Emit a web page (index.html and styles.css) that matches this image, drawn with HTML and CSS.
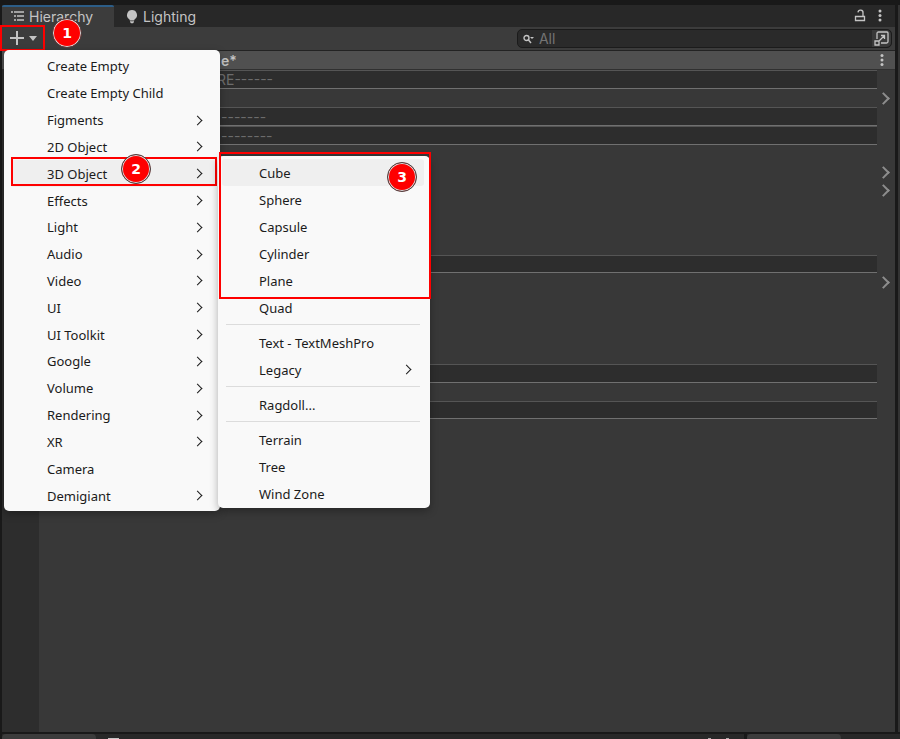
FILE: index.html
```html
<!DOCTYPE html>
<html lang="en">
<head>
  <meta charset="utf-8">
  <title>Hierarchy</title>
  <link rel="stylesheet" href="styles.css">
</head>
<body>
  <div class="workspace">
    <main class="panel">
      <div class="tabs">
        <button class="tab active">
          <svg width="13" height="12" viewBox="0 0 13 12" fill="none" stroke="currentColor" stroke-width="1.3"><path d="M0 2h2M3 2h10M3 6h2M6 6h7M3 10h2M6 10h7"/></svg>
          Hierarchy
        </button>
        <button class="tab">
          <svg width="12" height="15" viewBox="0 0 12 15" fill="currentColor"><path d="M6 1a5 5 0 0 1 3 9c-.6.500-.8.800-.8 1.500H3.800c0-.7-.2-1-.8-1.500A5 5 0 0 1 6 1zM4 12.300h4v.7l-1 1.200H5L4 13z"/></svg>
          Lighting
        </button>
        <div class="tab-tools">
          <button class="icon" aria-label="Lock">
            <svg width="12" height="14" viewBox="0 0 12 14" fill="none" stroke="currentColor" stroke-width="1.300"><path d="M1.500 7.500h9v4h-9zM9 7V4a2.500 2.500 0 0 0-5-.6"/></svg>
          </button>
          <button class="icon" aria-label="Panel menu">
            <svg width="4" height="14" viewBox="0 0 4 14" fill="currentColor"><circle cx="2" cy="2" r="1.500"/><circle cx="2" cy="6.500" r="1.500"/><circle cx="2" cy="11" r="1.500"/></svg>
          </button>
        </div>
      </div>

      <div class="toolbar">
        <div class="create">
          <button class="create-button" aria-label="Create">
            <svg width="30" height="16" viewBox="0 0 30 16" fill="currentColor"><path d="M8 1h2v6h6v2h-6v6H8V9H2V7h6zM21 6h8l-4 5z"/></svg>
          </button>
          <span class="badge badge-1">1</span>

          <ul class="menu">
            <li><button>Create Empty</button></li>
            <li><button>Create Empty Child</button></li>
            <li><button class="more">Figments</button></li>
            <li><button class="more">2D Object</button></li>
            <li class="open">
              <button class="more selected">3D Object</button>
              <span class="outline"></span>
              <span class="badge badge-2">2</span>
              <ul class="submenu">
                <li><button class="selected">Cube</button></li>
                <li><button>Sphere</button></li>
                <li><button>Capsule</button></li>
                <li><button>Cylinder</button></li>
                <li><button>Plane</button></li>
                <li><button>Quad</button></li>
                <li class="separator"></li>
                <li><button>Text - TextMeshPro</button></li>
                <li><button class="more">Legacy</button></li>
                <li class="separator"></li>
                <li><button>Ragdoll...</button></li>
                <li class="separator"></li>
                <li><button>Terrain</button></li>
                <li><button>Tree</button></li>
                <li><button>Wind Zone</button></li>
              </ul>
              <span class="outline shapes-outline"></span>
              <span class="badge badge-3">3</span>
            </li>
            <li><button class="more">Effects</button></li>
            <li><button class="more">Light</button></li>
            <li><button class="more">Audio</button></li>
            <li><button class="more">Video</button></li>
            <li><button class="more">UI</button></li>
            <li><button class="more">UI Toolkit</button></li>
            <li><button class="more">Google</button></li>
            <li><button class="more">Volume</button></li>
            <li><button class="more">Rendering</button></li>
            <li><button class="more">XR</button></li>
            <li><button>Camera</button></li>
            <li><button class="more">Demigiant</button></li>
          </ul>
        </div>

        <div class="search">
          <svg width="12" height="10" viewBox="0 0 12 10" fill="none" stroke="currentColor" stroke-width="1.400"><circle cx="3.500" cy="4" r="2.500"/><path d="M5.500 6l2.500 3"/><path d="M7 3h4L9 5z" fill="currentColor" stroke="none"/></svg>
          <input type="text" placeholder="All" aria-label="Search">
          <button class="icon" aria-label="Open search window">
            <svg width="15" height="15" viewBox="0 0 15 15" fill="none" stroke="currentColor" stroke-width="1.300"><path d="M3 8V2.500Q3 1 4.500 1H13q1 0 1 1v8.500q0 1.500-1.500 1.500H7M1 10h4v4H1zM5.500 9.500L10.500 4.500M7 4.500h3.500V8"/></svg>
          </button>
        </div>
      </div>

      <div class="scene">
        <span>e*</span>
        <button class="icon" aria-label="Scene menu">
          <svg width="4" height="14" viewBox="0 0 4 14" fill="currentColor"><circle cx="2" cy="2.500" r="1.500"/><circle cx="2" cy="7" r="1.500"/><circle cx="2" cy="11.500" r="1.500"/></svg>
        </button>
      </div>

      <div class="tree">
        <div class="gutter"></div>
        <ul class="rows">
          <li class="header re">RE------</li>
          <li class="prefab"></li>
          <li class="header">-------</li>
          <li class="header">--------</li>
          <li></li>
          <li class="prefab"></li>
          <li class="prefab"></li>
          <li></li>
          <li></li>
          <li></li>
          <li class="header"></li>
          <li class="prefab"></li>
          <li></li>
          <li></li>
          <li></li>
          <li></li>
          <li class="header"></li>
          <li></li>
          <li class="header"></li>
        </ul>
      </div>
    </main>
    <div class="next-panel"></div>
  </div>

  <div class="dock">
    <div class="dock-left"><span class="dock-tab"></span><span class="dock-icon"></span><span class="dock-dot"></span><span class="dock-dot"></span></div>
    <div class="dock-right"><span class="dock-tab"></span></div>
  </div>
</body>
</html>
```

FILE: styles.css
```css
* {
  box-sizing: border-box;
}

body {
  margin: 0;
  min-height: 100vh;
  display: flex;
  flex-direction: column;
  overflow: hidden;
  background: #191919;
  color: #c4c4c4;
  font-family: Inter, "Liberation Sans", sans-serif;
  font-size: 14px;
}

ul {
  list-style: none;
  margin: 0;
  padding: 0;
}

button {
  border: none;
  padding: 0;
  margin: 0;
  background: none;
  color: inherit;
  font: inherit;
}

svg {
  display: block;
}

.workspace {
  flex: 1;
  display: flex;
  gap: 3px;
  padding: 5px 0 0 2px;
}

.panel {
  flex: 1;
  display: flex;
  flex-direction: column;
  background: #383838;
}

.next-panel {
  width: 2px;
  background: #333;
}

.tabs {
  display: flex;
  height: 22px;
  background: #282828;
}

.tab {
  display: flex;
  align-items: center;
  gap: 5px;
  padding: 0 12px;
}

.tab.active {
  width: 112px;
  padding: 0 0 2px 9px;
  background: #3c3c3c;
  border-top: 2px solid #2c5d87;
  border-radius: 2px 2px 0 0;
}

.tab-tools {
  margin-left: auto;
  display: flex;
  align-items: center;
  gap: 12px;
  padding-right: 13px;
}

.toolbar {
  display: flex;
  justify-content: space-between;
  height: 24px;
  background: #3c3c3c;
  border-bottom: 1px solid #232323;
}

.create {
  position: relative;
}

.create-button {
  display: flex;
  align-items: center;
  justify-content: center;
  width: 45px;
  height: 26px;
  margin: -2px 0 0 -2px;
  border: 2px solid #fe0000;
}

.search {
  width: 42%;
  height: 19px;
  margin: 2px 3px 0 0;
  display: flex;
  align-items: center;
  gap: 4px;
  padding-left: 5px;
  background: #2a2a2a;
  border: 1px solid #1b1b1b;
  border-radius: 5px;
}

.search input {
  flex: 1;
  min-width: 0;
  padding: 0;
  border: none;
  outline: none;
  background: none;
  color: #c4c4c4;
  font: inherit;
}

.search input::placeholder {
  color: #747474;
}

.search .icon {
  align-self: stretch;
  padding: 1px 2px;
  background: #393939;
  border-radius: 0 5px 5px 0;
}

.scene {
  display: flex;
  align-items: center;
  justify-content: space-between;
  height: 19px;
  padding: 0 11px 0 219px;
  background: #505050;
  border-bottom: 1px solid #303030;
  font-weight: 600;
}

.tree {
  flex: 1;
  display: flex;
}

.gutter {
  width: 37px;
  background: #2d2d2d;
}

.rows {
  flex: 1;
  display: grid;
  grid-auto-rows: 1fr;
  height: 349px;
  color: #6c6c6c;
}

.rows li {
  display: flex;
  align-items: center;
  padding-left: 182px;
}

.rows .header {
  margin-right: 18px;
  background: #2d2d2d;
  border-top: 1px solid #555;
  border-bottom: 1px solid #707070;
}

.rows .re {
  padding-left: 178px;
}

.rows .prefab {
  justify-content: flex-end;
  padding-right: 7px;
}

.prefab::after,
.more::after {
  content: "";
  width: 7px;
  height: 7px;
  border: solid #8d8d8d;
  border-width: 2px 2px 0 0;
  transform: rotate(45deg);
}

/* create menu */
.menu,
.submenu {
  position: absolute;
  background: #f9f9f9;
  border-radius: 5px;
  color: #1b1b1b;
  font-family: "Noto Sans", "Open Sans", sans-serif;
  font-size: 13px;
  box-shadow: 0 3px 8px rgba(0, 0, 0, 0.3);
}

.menu {
  top: 23px;
  left: 2px;
  z-index: 1;
  width: 216px;
  height: 461px;
  padding: 3px 4px 2px 7px;
  display: grid;
  grid-auto-rows: 1fr;
}

.submenu {
  top: -4px;
  left: 207px;
  width: 212px;
  padding: 3px 6px 1px 4px;
}

.menu button {
  display: flex;
  align-items: center;
  justify-content: space-between;
  width: 100%;
  height: 100%;
  padding: 0 15px 0 36px;
  border-radius: 3px;
  text-align: left;
}

.submenu button {
  height: 27px;
  padding: 0 14px 0 37px;
}

.menu .selected {
  background: #efefef;
}

.menu .more::after {
  width: 6px;
  height: 6px;
  border-color: #1b1b1b;
  border-width: 1px 1px 0 0;
}

.separator {
  height: 8px;
  padding-top: 3px;
}

.separator::before {
  content: "";
  display: block;
  height: 1px;
  margin-left: 4px;
  margin-right: 4px;
  background: #dcdcdc;
}

.open {
  position: relative;
}

/* step markers */
.outline {
  position: absolute;
  top: -3px;
  left: 0;
  width: 206px;
  height: 29px;
  border: 2px solid #fe0000;
}

.shapes-outline {
  top: -8px;
  left: 208px;
  width: 212px;
  height: 147px;
}

.badge {
  position: absolute;
  z-index: 2;
  width: 30px;
  height: 30px;
  border: 1px solid #444;
  border-radius: 50%;
  background: #fe0000;
  box-shadow: inset 0 0 0 1px #ddd;
  color: #fff;
  font-family: "DejaVu Sans", sans-serif;
  font-size: 14px;
  font-weight: 700;
  line-height: 28px;
  text-align: center;
}

.badge-1 {
  top: -9px;
  left: 50px;
}

.badge-2 {
  top: -6px;
  left: 110px;
}

.badge-3 {
  top: 2px;
  left: 376px;
}

/* tops of the panels docked below */
.dock {
  display: flex;
  gap: 3px;
  height: 7px;
  padding: 2px 0 0 2px;
}

.dock-left,
.dock-right {
  display: flex;
  background: #282828;
}

.dock-left {
  flex: 1;
  align-items: flex-end;
}

.dock-right {
  width: 17%;
}

.dock-tab {
  width: 94px;
  height: 5px;
  background: #3c3c3c;
  border-radius: 4px 4px 0 0;
}

.dock-icon {
  width: 11px;
  height: 1px;
  margin: 0 auto 0 12px;
  background: #c4c4c4;
}

.dock-dot {
  width: 3px;
  height: 1px;
  margin-right: 15px;
  background: #aaa;
}
```
